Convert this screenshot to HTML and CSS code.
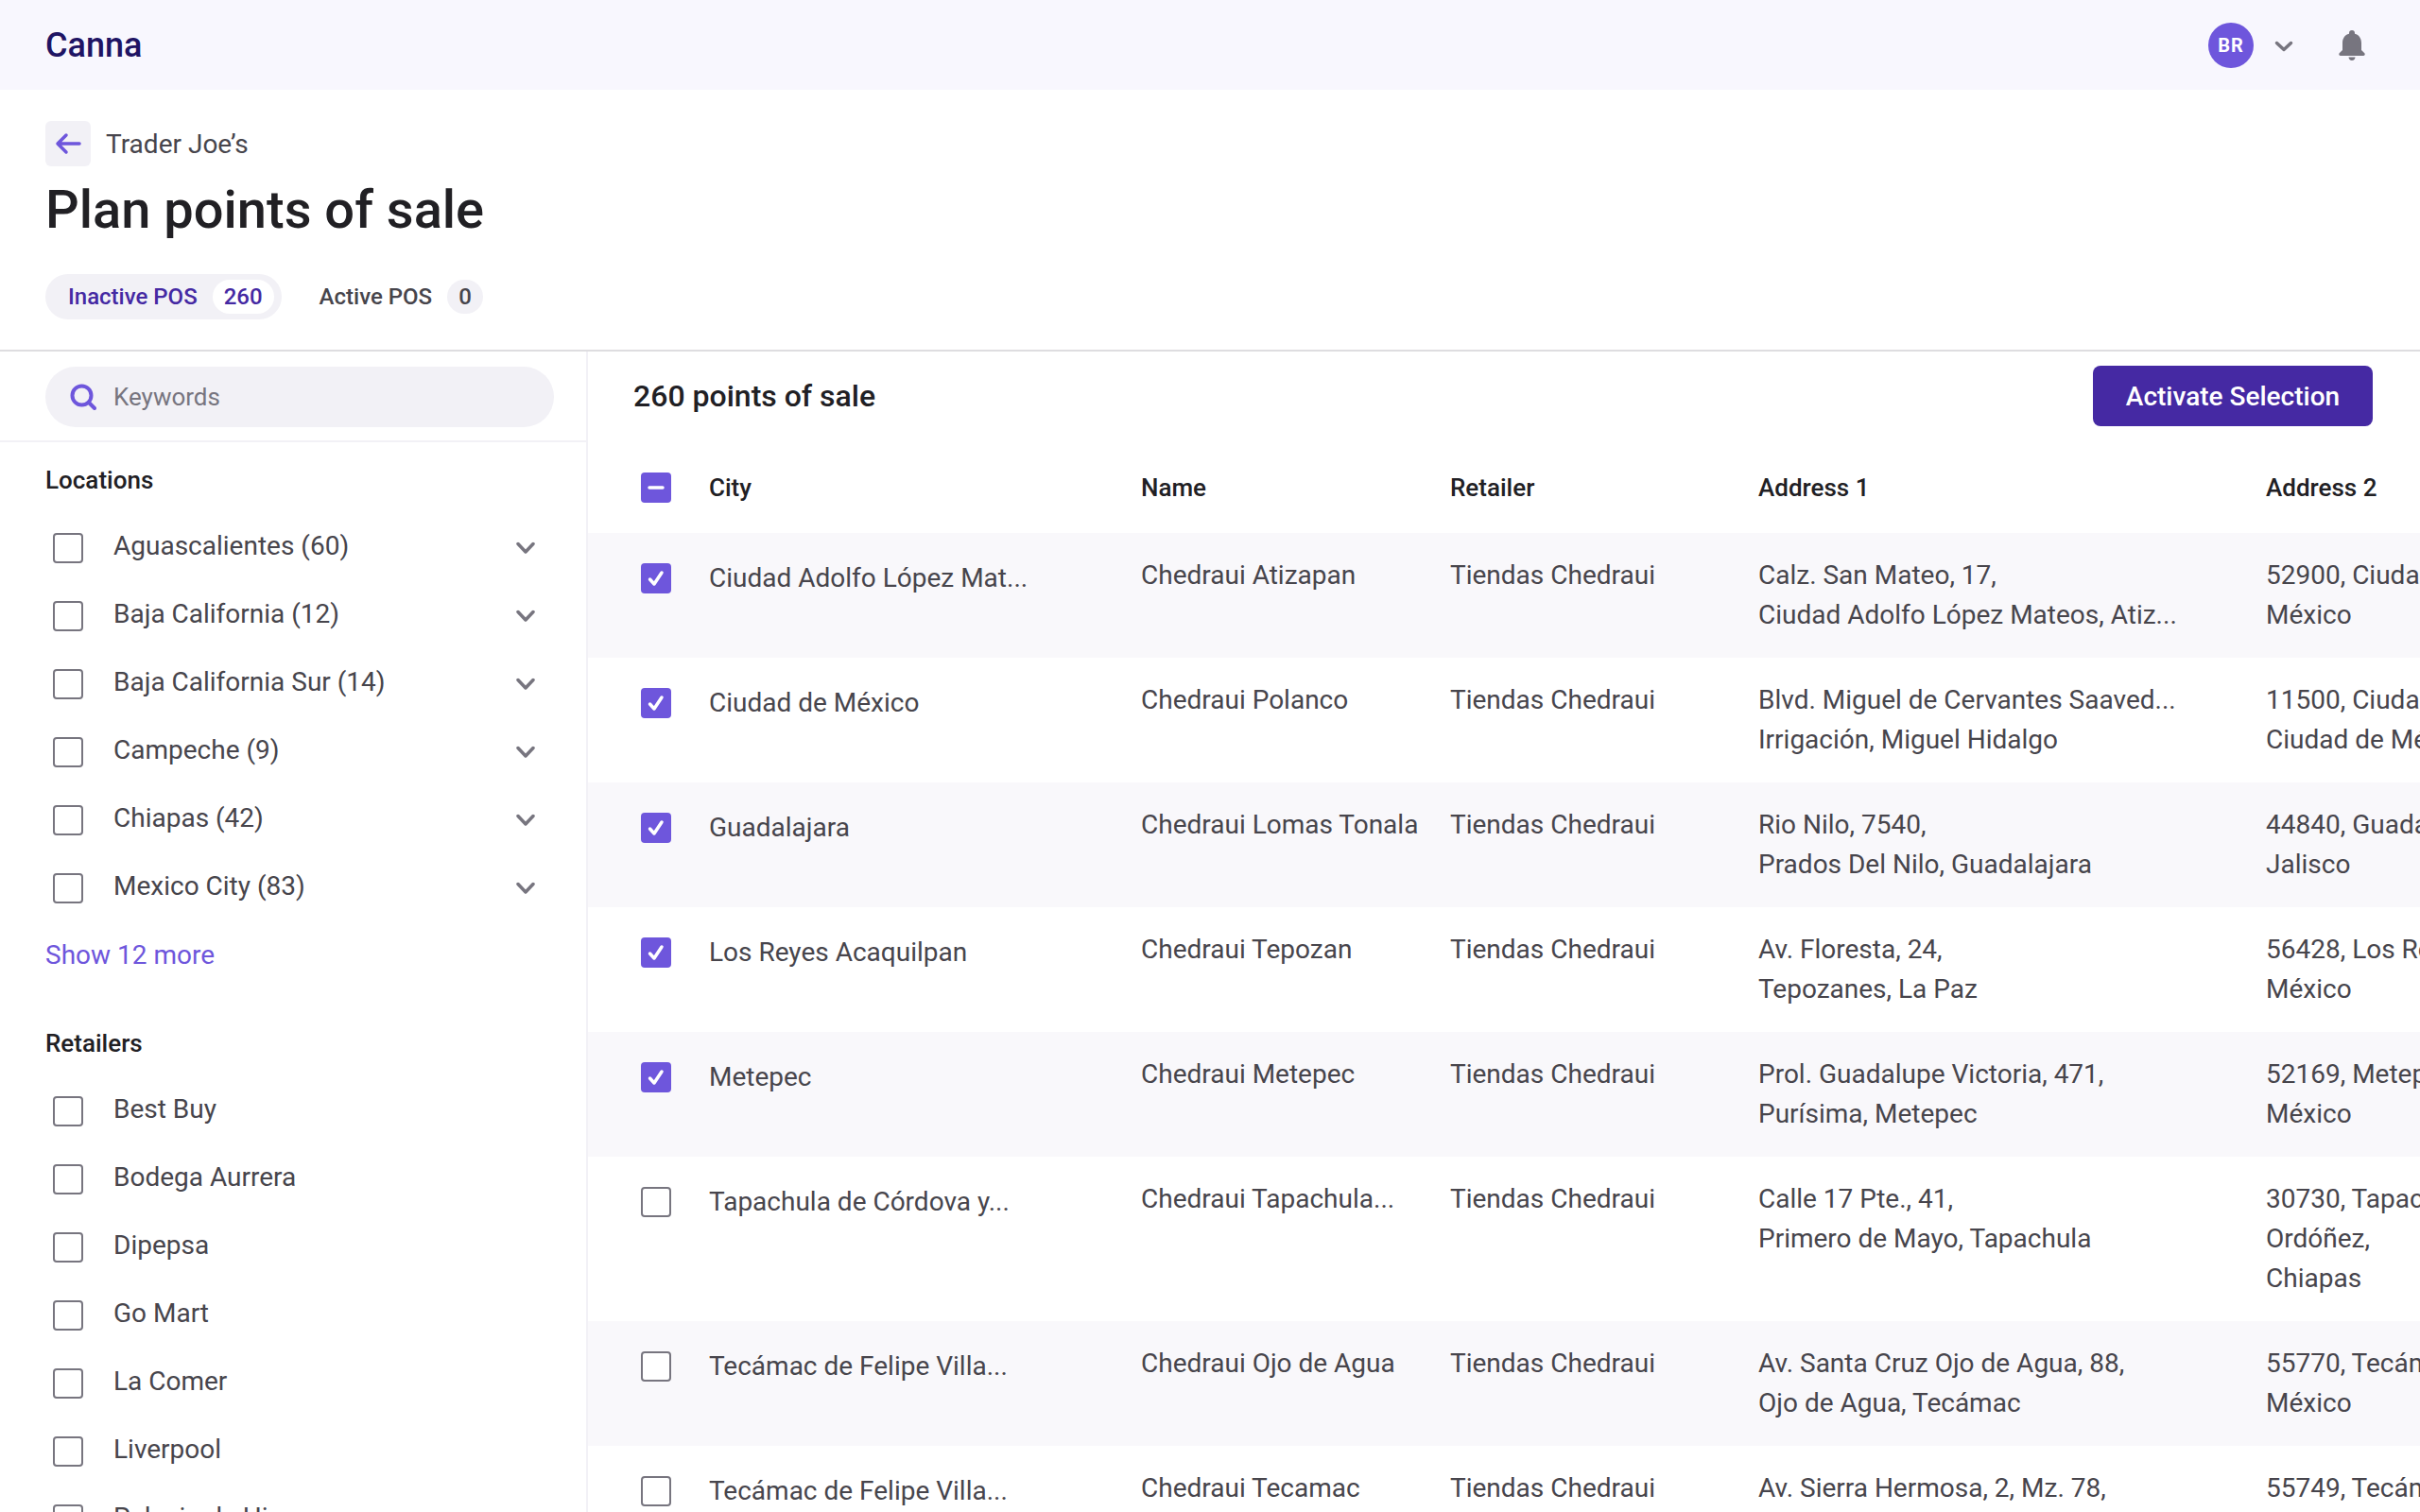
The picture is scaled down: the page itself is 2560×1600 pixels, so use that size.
FILE: index.html
```html
<!DOCTYPE html>
<html lang="en">
<head>
    <meta charset="UTF-8">
    <title>Plan points of sale - Canna</title>
    <link rel="stylesheet" href="styles.css">
</head>
<body>
    <header class="topbar">
        <div class="brand">Canna</div>
        <div class="topbar-actions">
            <div class="avatar">BR</div>
            <svg class="user-chevron" viewBox="0 0 20 12"><path d="M2.5 2.5 10 9.5l7.5-7"/></svg>
            <svg class="bell" viewBox="0 0 28 32"><path d="M14 0c1.9 0 3 1.300 3 3v.8c4.600 1.200 7 5 7 9.700v7.500l3.300 3.200c.9.9.3 2.800-1.100 2.800H1.800C.4 27-.2 25.100.7 24.200L4 21v-7.500c0-4.700 2.400-8.500 7-9.700V3c0-1.700 1.100-3 3-3zM10.500 28.500h7c0 1.900-1.600 3.500-3.500 3.500s-3.500-1.600-3.500-3.500z"/></svg>
        </div>
    </header>

    <section class="page-head">
        <div class="crumb">
            <a class="back-btn"><svg viewBox="0 0 28 24"><path d="M12 3 3 12l9 9M3.500 12H26"/></svg></a>
            <span>Trader Joe’s</span>
        </div>
        <h1>Plan points of sale</h1>
        <div class="tabs">
            <div class="tab active">Inactive POS <span class="count">260</span></div>
            <div class="tab">Active POS <span class="count">0</span></div>
        </div>
    </section>

    <div class="content">
        <aside class="sidebar">
            <div class="search-wrap">
                <div class="search">
                    <svg viewBox="0 0 28 28"><circle cx="12.500" cy="12.500" r="10"/><path d="m20 20 6 6"/></svg>
                    <span>Keywords</span>
                </div>
            </div>

            <div class="filter-group">
                <h3>Locations</h3>
                <div class="filter-item"><span class="box"></span><span class="filter-name">Aguascalientes (60)</span><svg class="chevron" viewBox="0 0 20 14"><path d="M2 2.500 10 11l8-8.500"/></svg></div>
                <div class="filter-item"><span class="box"></span><span class="filter-name">Baja California (12)</span><svg class="chevron" viewBox="0 0 20 14"><path d="M2 2.500 10 11l8-8.500"/></svg></div>
                <div class="filter-item"><span class="box"></span><span class="filter-name">Baja California Sur (14)</span><svg class="chevron" viewBox="0 0 20 14"><path d="M2 2.500 10 11l8-8.500"/></svg></div>
                <div class="filter-item"><span class="box"></span><span class="filter-name">Campeche (9)</span><svg class="chevron" viewBox="0 0 20 14"><path d="M2 2.500 10 11l8-8.500"/></svg></div>
                <div class="filter-item"><span class="box"></span><span class="filter-name">Chiapas (42)</span><svg class="chevron" viewBox="0 0 20 14"><path d="M2 2.500 10 11l8-8.500"/></svg></div>
                <div class="filter-item"><span class="box"></span><span class="filter-name">Mexico City (83)</span><svg class="chevron" viewBox="0 0 20 14"><path d="M2 2.500 10 11l8-8.500"/></svg></div>
                <a class="show-more">Show 12 more</a>
            </div>

            <div class="filter-group">
                <h3>Retailers</h3>
                <div class="filter-item"><span class="box"></span><span class="filter-name">Best Buy</span></div>
                <div class="filter-item"><span class="box"></span><span class="filter-name">Bodega Aurrera</span></div>
                <div class="filter-item"><span class="box"></span><span class="filter-name">Dipepsa</span></div>
                <div class="filter-item"><span class="box"></span><span class="filter-name">Go Mart</span></div>
                <div class="filter-item"><span class="box"></span><span class="filter-name">La Comer</span></div>
                <div class="filter-item"><span class="box"></span><span class="filter-name">Liverpool</span></div>
                <div class="filter-item"><span class="box"></span><span class="filter-name">Palacio de Hierro</span></div>
            </div>
        </aside>

        <main class="results">
            <div class="toolbar">
                <div class="total">260 points of sale</div>
                <button class="primary">Activate Selection</button>
            </div>
            <table class="pos-table">
                <thead>
                    <tr>
                        <th class="col-check"><span class="box checked"><svg viewBox="0 0 32 32"><path d="M9 16h14"/></svg></span></th>
                        <th class="col-city">City</th>
                        <th class="col-name">Name</th>
                        <th class="col-retailer">Retailer</th>
                        <th class="col-addr">Address 1</th>
                        <th class="col-addr2">Address 2</th>
                    </tr>
                </thead>
                <tbody>
                    <tr>
                        <td><span class="box checked"><svg viewBox="0 0 32 32"><path d="m9.500 17 4.500 5 8-12"/></svg></span></td>
                        <td class="city">Ciudad Adolfo López Mat...</td>
                        <td>Chedraui Atizapan</td>
                        <td>Tiendas Chedraui</td>
                        <td>Calz. San Mateo, 17,<br>Ciudad Adolfo López Mateos, Atiz...</td>
                        <td>52900, Ciudad López Mateos,<br>México</td>
                    </tr>
                    <tr>
                        <td><span class="box checked"><svg viewBox="0 0 32 32"><path d="m9.500 17 4.500 5 8-12"/></svg></span></td>
                        <td class="city">Ciudad de México</td>
                        <td>Chedraui Polanco</td>
                        <td>Tiendas Chedraui</td>
                        <td>Blvd. Miguel de Cervantes Saaved...<br>Irrigación, Miguel Hidalgo</td>
                        <td>11500, Ciudad de México,<br>Ciudad de México</td>
                    </tr>
                    <tr>
                        <td><span class="box checked"><svg viewBox="0 0 32 32"><path d="m9.500 17 4.500 5 8-12"/></svg></span></td>
                        <td class="city">Guadalajara</td>
                        <td>Chedraui Lomas Tonala</td>
                        <td>Tiendas Chedraui</td>
                        <td>Rio Nilo, 7540,<br>Prados Del Nilo, Guadalajara</td>
                        <td>44840, Guadalajara,<br>Jalisco</td>
                    </tr>
                    <tr>
                        <td><span class="box checked"><svg viewBox="0 0 32 32"><path d="m9.500 17 4.500 5 8-12"/></svg></span></td>
                        <td class="city">Los Reyes Acaquilpan</td>
                        <td>Chedraui Tepozan</td>
                        <td>Tiendas Chedraui</td>
                        <td>Av. Floresta, 24,<br>Tepozanes, La Paz</td>
                        <td>56428, Los Reyes,<br>México</td>
                    </tr>
                    <tr>
                        <td><span class="box checked"><svg viewBox="0 0 32 32"><path d="m9.500 17 4.500 5 8-12"/></svg></span></td>
                        <td class="city">Metepec</td>
                        <td>Chedraui Metepec</td>
                        <td>Tiendas Chedraui</td>
                        <td>Prol. Guadalupe Victoria, 471,<br>Purísima, Metepec</td>
                        <td>52169, Metepec,<br>México</td>
                    </tr>
                    <tr>
                        <td><span class="box"></span></td>
                        <td class="city">Tapachula de Córdova y...</td>
                        <td>Chedraui Tapachula...</td>
                        <td>Tiendas Chedraui</td>
                        <td>Calle 17 Pte., 41,<br>Primero de Mayo, Tapachula</td>
                        <td>30730, Tapachula de Córdova y<br>Ordóñez,<br>Chiapas</td>
                    </tr>
                    <tr>
                        <td><span class="box"></span></td>
                        <td class="city">Tecámac de Felipe Villa...</td>
                        <td>Chedraui Ojo de Agua</td>
                        <td>Tiendas Chedraui</td>
                        <td>Av. Santa Cruz Ojo de Agua, 88,<br>Ojo de Agua, Tecámac</td>
                        <td>55770, Tecámac,<br>México</td>
                    </tr>
                    <tr>
                        <td><span class="box"></span></td>
                        <td class="city">Tecámac de Felipe Villa...</td>
                        <td>Chedraui Tecamac</td>
                        <td>Tiendas Chedraui</td>
                        <td>Av. Sierra Hermosa, 2, Mz. 78,<br>Sierra Hermosa, Tecámac</td>
                        <td>55749, Tecámac,<br>México</td>
                    </tr>
                </tbody>
            </table>
        </main>
    </div>
</body>
</html>
```

FILE: styles.css
```css
* {
    box-sizing: border-box;
}
html, body {
    height: 100%;
}
body {
    margin: 0;
    display: flex;
    flex-direction: column;
    overflow: hidden;
    background: #fff;
    font-family: Roboto, "Noto Sans", sans-serif;
    color: #47454c;
}

/* top bar */
.topbar {
    flex: none;
    height: 95px;
    padding: 0 58px 0 48px;
    display: flex;
    align-items: center;
    justify-content: space-between;
    background: #f8f7fe;
}
.brand {
    font-size: 36px;
    font-weight: 500;
    color: #1f1464;
}
.topbar-actions {
    display: flex;
    align-items: center;
}
.avatar {
    width: 48px;
    height: 48px;
    border-radius: 50%;
    background: #6e56dc;
    color: #fff;
    font-size: 20px;
    font-weight: 700;
    letter-spacing: 1px;
    display: flex;
    align-items: center;
    justify-content: center;
}
.user-chevron {
    width: 20px;
    height: 12px;
    margin: 2px 48px 0 22px;
    fill: none;
    stroke: #77757f;
    stroke-width: 3.5;
    stroke-linecap: round;
    stroke-linejoin: round;
}
.bell {
    width: 28px;
    height: 32px;
    fill: #77757f;
}

/* page heading */
.page-head {
    flex: none;
    height: 277px;
    padding: 33px 48px 0;
    border-bottom: 2px solid #dedde0;
}
.crumb {
    display: flex;
    align-items: center;
    gap: 16px;
    font-size: 28px;
}
.back-btn {
    width: 48px;
    height: 48px;
    border-radius: 6px;
    background: #f2f1f6;
    display: flex;
    align-items: center;
    justify-content: center;
}
.back-btn svg {
    width: 28px;
    height: 24px;
    fill: none;
    stroke: #6e56dc;
    stroke-width: 3.500;
    stroke-linecap: round;
    stroke-linejoin: round;
}
h1 {
    margin: 10px 0 0;
    font-size: 56px;
    line-height: 72px;
    font-weight: 500;
    color: #212024;
}
.tabs {
    margin-top: 32px;
    display: flex;
    gap: 40px;
}
.tab {
    height: 48px;
    display: flex;
    align-items: center;
    gap: 16px;
    font-size: 24px;
    font-weight: 500;
    color: #47454c;
}
.tab.active {
    padding: 0 8px 0 24px;
    border-radius: 24px;
    background: #f2f1f6;
    color: #4529a3;
}
.count {
    min-width: 38px;
    height: 36px;
    padding: 0 12px;
    border-radius: 18px;
    background: #f2f1f6;
    display: flex;
    align-items: center;
    justify-content: center;
}
.tab.active .count {
    background: #fff;
}

/* layout under the heading */
.content {
    flex: 1;
    min-height: 0;
    display: flex;
}

/* filters */
.sidebar {
    flex: none;
    width: 622px;
    border-right: 2px solid #f2f1f6;
    overflow: hidden;
}
.search-wrap {
    height: 96px;
    padding: 16px 34px 0 48px;
    border-bottom: 2px solid #f2f1f6;
}
.search {
    height: 64px;
    padding-left: 26px;
    border-radius: 32px;
    background: #f2f1f6;
    display: flex;
    align-items: center;
    gap: 18px;
    font-size: 26px;
    color: #77757f;
}
.search svg {
    width: 28px;
    height: 28px;
    fill: none;
    stroke: #6e56dc;
    stroke-width: 4;
    stroke-linecap: round;
}
.filter-group {
    padding: 20px 48px 0;
}
.filter-group h3 {
    margin: 0 0 16px;
    font-size: 26px;
    line-height: 40px;
    font-weight: 500;
    color: #212024;
}
.filter-item {
    height: 72px;
    padding-left: 8px;
    display: flex;
    align-items: center;
    font-size: 28px;
}
.filter-name {
    flex: 1;
    margin: -6px 0 0 32px;
}
.chevron {
    width: 20px;
    height: 14px;
    margin-right: 6px;
    fill: none;
    stroke: #77757f;
    stroke-width: 3.500;
    stroke-linecap: round;
    stroke-linejoin: round;
}
.show-more {
    display: block;
    margin-top: 14px;
    font-size: 28px;
    line-height: 42px;
    color: #6e56dc;
}
.filter-group + .filter-group {
    padding-top: 52px;
}

/* checkboxes */
.box {
    flex: none;
    display: block;
    width: 32px;
    height: 32px;
    border: 2px solid #77757f;
    border-radius: 4px;
    background: #fff;
}
.box.checked {
    border: 0;
    background: #6e56dc;
}
.box svg {
    display: block;
    width: 32px;
    height: 32px;
    fill: none;
    stroke: #fff;
    stroke-width: 3.500;
    stroke-linecap: round;
    stroke-linejoin: round;
}

/* results */
.results {
    flex: 1;
    min-width: 0;
    overflow: hidden;
}
.toolbar {
    height: 96px;
    padding: 15px 50px 0 48px;
    display: flex;
    align-items: flex-start;
    justify-content: space-between;
}
.total {
    font-size: 32px;
    line-height: 64px;
    font-weight: 500;
    color: #212024;
}
.primary {
    width: 296px;
    height: 64px;
    border: 0;
    border-radius: 8px;
    background: #4529a3;
    color: #fff;
    font-family: inherit;
    font-size: 28px;
    font-weight: 500;
}
.pos-table {
    table-layout: fixed;
    width: 2400px;
    border-collapse: collapse;
    border-spacing: 0;
}
.pos-table th {
    height: 96px;
    padding: 0;
    text-align: left;
    font-size: 26px;
    font-weight: 500;
    color: #212024;
}
.pos-table td {
    padding: 24px 0;
    vertical-align: top;
    font-size: 28px;
    line-height: 42px;
    white-space: nowrap;
}
.pos-table tbody tr:nth-child(odd) {
    background: #f9f8fb;
}
.col-check {
    width: 128px;
}
.col-city {
    width: 457px;
}
.col-name {
    width: 327px;
}
.col-retailer {
    width: 326px;
}
.col-addr {
    width: 537px;
}
.pos-table th .box, .pos-table td .box {
    margin-left: 56px;
}
.pos-table td .box {
    margin-top: 8px;
}
.pos-table td.city {
    padding-top: 27px;
}
```
